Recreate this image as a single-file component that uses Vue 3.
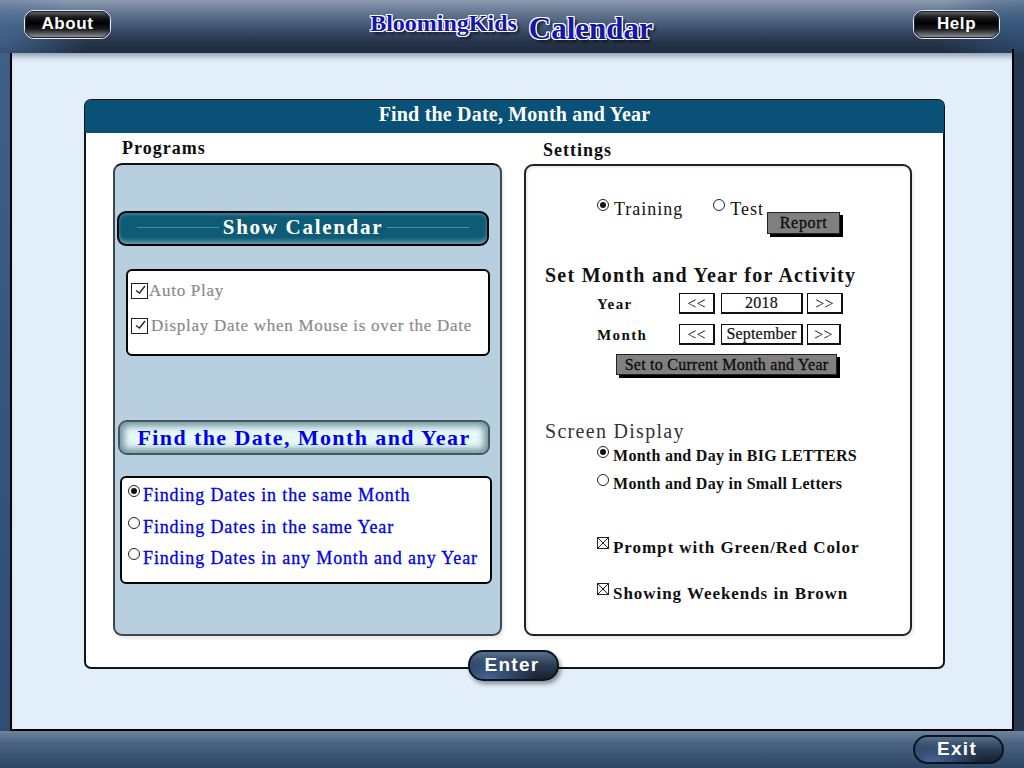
<template>
  <div class="screen">
    <header class="topbar">
      <button class="gloss">About</button>
      <div class="brand">
        <span class="brand-small">BloomingKids</span>
        <span class="brand-big">Calendar</span>
      </div>
      <button class="gloss">Help</button>
    </header>

    <main class="stage">
      <section class="card">
        <h1 class="card-title">Find the Date, Month and Year</h1>
        <div class="columns">
          <div class="col">
            <h2 class="col-title programs-title">Programs</h2>
            <div class="programs">
              <div class="show-bar">Show Calendar</div>
              <div class="box auto-box">
                <div class="auto-row" v-for="row in autoRows" :key="row.label" :class="row.cls">
                  <svg class="tick" width="18" height="16" viewBox="0 0 18 16">
                    <rect x="0.5" y="0.5" width="16" height="15" fill="#fff" stroke="#222" />
                    <path d="M5 7.5 L8.5 10 L14 3" fill="none" stroke="#222" stroke-width="1.3" />
                  </svg>
                  <span>{{ row.label }}</span>
                </div>
              </div>
              <div class="find-bar">Find the Date, Month and Year</div>
              <div class="box find-box">
                <div class="find-row" v-for="(label, i) in findRows" :key="label">
                  <span class="radio" :class="{ on: i === 0 }"></span>
                  <span>{{ label }}</span>
                </div>
              </div>
            </div>
          </div>

          <div class="col">
            <h2 class="col-title settings-title">Settings</h2>
            <div class="settings">
              <div class="mode-row">
                <span class="radio on"></span>
                <span class="mode-label training">Training</span>
                <span class="radio"></span>
                <span class="mode-label">Test</span>
                <button class="grey report">Report</button>
              </div>
              <h3 class="set-title">Set Month and Year for Activity</h3>
              <div class="pick-row">
                <span class="pick-label">Year</span>
                <button class="pick arrow">&lt;&lt;</button>
                <span class="pick value">2018</span>
                <button class="pick arrow">&gt;&gt;</button>
              </div>
              <div class="pick-row month-row">
                <span class="pick-label">Month</span>
                <button class="pick arrow">&lt;&lt;</button>
                <span class="pick value">September</span>
                <button class="pick arrow narrow">&gt;&gt;</button>
              </div>
              <button class="grey current">Set to Current Month and Year</button>
              <h3 class="display-title">Screen Display</h3>
              <div class="display-row first">
                <span class="radio on"></span>
                <span>Month and Day in BIG LETTERS</span>
              </div>
              <div class="display-row">
                <span class="radio"></span>
                <span>Month and Day in Small Letters</span>
              </div>
              <div class="option-row prompt">
                <svg class="cross" width="12" height="12" viewBox="0 0 12 12">
                  <rect x="0.5" y="0.5" width="11" height="11" fill="#fff" stroke="#222" />
                  <path d="M1 1 L11 11 M11 1 L1 11" stroke="#222" stroke-width="1" />
                </svg>
                <span>Prompt with Green/Red Color</span>
              </div>
              <div class="option-row weekends">
                <svg class="cross" width="12" height="12" viewBox="0 0 12 12">
                  <rect x="0.5" y="0.5" width="11" height="11" fill="#fff" stroke="#222" />
                  <path d="M1 1 L11 11 M11 1 L1 11" stroke="#222" stroke-width="1" />
                </svg>
                <span>Showing Weekends in Brown</span>
              </div>
            </div>
          </div>
        </div>
        <button class="pill enter">Enter</button>
      </section>
    </main>

    <footer class="bottombar">
      <button class="pill">Exit</button>
    </footer>
  </div>
</template>

<script setup>
const autoRows = [
  { label: "Auto Play", cls: "auto-first" },
  { label: "Display Date when Mouse is over the Date", cls: "auto-second" },
];

const findRows = [
  "Finding Dates in the same Month",
  "Finding Dates in the same Year",
  "Finding Dates in any Month and any Year",
];
</script>

<style>
html,
body {
  margin: 0;
  background: #24384f;
}
</style>

<style scoped>
.screen {
  width: 1024px;
  height: 768px;
  display: flex;
  flex-direction: column;
  overflow: hidden;
  font-family: "Liberation Serif", serif;
  background:
    linear-gradient(90deg, rgba(38, 56, 80, 0) 1012px, #26374f 1012px),
    linear-gradient(180deg, #3f6089 0, #2e4c72 100%);
}

button {
  font-family: inherit;
  padding: 0;
  cursor: pointer;
}

h1,
h2,
h3 {
  margin: 0;
}

/* top and bottom bars */
.topbar {
  height: 53px;
  box-sizing: border-box;
  padding: 10px 24px 0;
  display: flex;
  justify-content: space-between;
  align-items: flex-start;
  background:
    radial-gradient(ellipse 90px 60px at 0 40px, rgba(70, 110, 155, 0.75), rgba(60, 95, 135, 0) 100%),
    radial-gradient(ellipse 90px 60px at 100% 30px, rgba(50, 85, 125, 0.8), rgba(60, 95, 135, 0) 100%),
    linear-gradient(180deg, #8c9bb0 0, #667993 12px, #3d526f 28px, #26344a 42px, #1f2b3d 52px);
}

.gloss {
  width: 87px;
  height: 29px;
  box-sizing: border-box;
  padding-bottom: 2px;
  border: 1px solid #e8edf2;
  outline: 1px solid #1a2230;
  outline-offset: -2px;
  border-radius: 10px;
  color: #fff;
  font-family: "Liberation Sans", sans-serif;
  font-size: 17px;
  font-weight: bold;
  letter-spacing: 0.6px;
  background: linear-gradient(180deg, #6d6f74 0, #1c1c1e 22%, #000 45%, #1c1c1e 68%, #9a9da2 100%);
}

.brand {
  display: flex;
  align-items: flex-start;
  gap: 12px;
  margin-top: -1px;
  margin-left: -1px;
  font-weight: bold;
  color: #1616a8;
  text-shadow:
    1px 0 0 #fff, -1px 0 0 #fff, 0 1px 0 #fff, 0 -1px 0 #fff,
    1px 1px 0 #fff, -1px -1px 0 #fff, 1px -1px 0 #fff, -1px 1px 0 #fff,
    3px 3px 3px rgba(0, 0, 0, 0.7);
}

.brand-small {
  font-size: 24px;
  line-height: 28px;
}

.brand-big {
  margin-top: 2px;
  font-size: 31px;
  line-height: 36px;
}

.bottombar {
  height: 37px;
  box-sizing: border-box;
  padding: 4px 20px 0 0;
  display: flex;
  justify-content: flex-end;
  background: linear-gradient(180deg, #6f829e 0, #4b6483 12px, #2c4565 37px);
}

.pill {
  width: 91px;
  height: 29px;
  box-sizing: border-box;
  padding: 0 3px 2px 0;
  border: 2px solid #0c1420;
  border-radius: 15px;
  color: #fff;
  font-family: "Liberation Sans", sans-serif;
  font-size: 19px;
  font-weight: bold;
  letter-spacing: 1.3px;
  background:
    radial-gradient(ellipse 50px 22px at 20% 100%, #45689a, rgba(69, 104, 154, 0) 100%),
    linear-gradient(180deg, #55708f 0, #2c4058 45%, #17202e 100%);
}

/* main frame */
.stage {
  flex: 1;
  position: relative;
  box-sizing: border-box;
  margin: 0 10px;
  border-left: 2px solid #000;
  border-right: 2px solid #000;
  border-bottom: 2px solid #000;
  padding: 46px 0 0 72px;
  background: #e2effa;
  box-shadow: inset 0 7px 6px -4px #8797a6;
}

.stage::after {
  content: "";
  position: absolute;
  right: -2px;
  top: -4px;
  width: 2px;
  height: 4px;
  background: #000;
}

.card {
  position: relative;
  width: 861px;
  height: 570px;
  box-sizing: border-box;
  border: 2px solid #141414;
  border-radius: 7px;
  background: #fff;
}

.card-title {
  margin: -1px -1px 0;
  height: 33px;
  border-radius: 5px 5px 0 0;
  background: #0a5178;
  color: #fff;
  font-size: 20px;
  line-height: 29px;
  font-weight: bold;
  letter-spacing: 0.2px;
  text-align: center;
}

.enter {
  position: absolute;
  left: 382px;
  top: 549px;
  height: 31px;
  box-shadow: 2px 3px 4px rgba(0, 0, 0, 0.4);
}

.columns {
  display: grid;
  grid-template-columns: 389px 388px;
  gap: 22px;
  padding-left: 27px;
}

.col-title {
  font-size: 18px;
  font-weight: bold;
  color: #0d0d0d;
  letter-spacing: 1px;
}

.programs-title {
  height: 30px;
  line-height: 31px;
  padding-left: 9px;
}

.settings-title {
  height: 31px;
  line-height: 35px;
  padding-left: 19px;
}

/* left panel */
.programs {
  height: 473px;
  box-sizing: border-box;
  border: 2px solid #3c4750;
  border-top-color: #111;
  border-radius: 9px;
  padding: 46px 0 0;
  background: #b8cfdf;
  box-shadow: 2px 3px 3px #ececec;
}

.show-bar {
  margin-left: 2px;
  width: 372px;
  height: 35px;
  box-sizing: border-box;
  padding: 0 18px 2px;
  display: flex;
  align-items: center;
  gap: 4px;
  border: 2px solid #050505;
  border-radius: 9px;
  background: #0e5b76;
  box-shadow: inset 0 -4px 4px -1px #6c9aac, inset 0 3px 3px -1px #3a7c94;
  color: #fff;
  font-size: 21px;
  font-weight: bold;
  letter-spacing: 1.7px;
}

.show-bar::before,
.show-bar::after {
  content: "";
  flex: 1;
  height: 1px;
  background: #3f8fa8;
}

.box {
  box-sizing: border-box;
  border: 2px solid #050505;
  border-radius: 6px;
  background: #fff;
}

.auto-box {
  margin: 23px 0 0 11px;
  width: 364px;
  height: 87px;
  padding: 11px 0 0 3px;
  color: #8a8a8a;
  font-size: 17px;
  letter-spacing: 0.72px;
  -webkit-text-stroke: 0.2px #8a8a8a;
}

.auto-row {
  display: flex;
  align-items: center;
  height: 18px;
}

.auto-second {
  margin-top: 17px;
}

.auto-second .tick {
  margin-right: 2px;
}

.find-bar {
  margin: 64px 0 0 3px;
  width: 372px;
  height: 35px;
  box-sizing: border-box;
  border: 2px solid #46555f;
  border-radius: 9px;
  background: #e6f9f8;
  box-shadow: inset 0 0 7px 4px #6d929c;
  color: #0000ee;
  font-size: 22px;
  font-weight: bold;
  line-height: 31px;
  letter-spacing: 1.4px;
  text-align: center;
}

.find-box {
  margin: 21px 0 0 5px;
  width: 372px;
  height: 108px;
  padding: 6px 0 0 6px;
  color: #0000e6;
  font-size: 18px;
  letter-spacing: 0.87px;
  -webkit-text-stroke: 0.3px #0000e6;
}

.find-row {
  display: flex;
  align-items: flex-start;
  height: 31.5px;
  line-height: 22px;
}

.find-row .radio {
  margin: 1px 3px 0 0;
}

.radio {
  position: relative;
  flex: none;
  width: 12px;
  height: 12px;
  box-sizing: border-box;
  border: 1px solid #222;
  border-radius: 50%;
  background: #fff;
  -webkit-text-stroke: 0;
}

.radio.on::after {
  content: "";
  position: absolute;
  inset: 2px;
  border-radius: 50%;
  background: #111;
}

/* right panel */
.settings {
  height: 472px;
  box-sizing: border-box;
  border: 2px solid #222;
  border-radius: 9px;
  padding: 33px 0 0 19px;
  background: #fff;
  box-shadow: 2px 3px 3px #ececec, inset 2px 2px 2px #eeeeee;
  color: #111;
}

.mode-row {
  display: flex;
  align-items: flex-start;
  height: 64px;
  padding-left: 52px;
  font-size: 18px;
  letter-spacing: 1px;
  line-height: 20px;
}

.mode-label {
  margin-left: 5px;
}

.training {
  margin-right: 30px;
}

.grey {
  box-sizing: border-box;
  border: 1px solid #222;
  background: #808080;
  box-shadow: 3px 3px 0 #000;
  color: #0c0c0c;
  font-family: "Liberation Serif", serif;
  font-weight: normal;
  -webkit-text-stroke: 0.3px #0c0c0c;
}

.report {
  width: 73px;
  height: 22px;
  margin: 13px 0 0 3px;
  font-size: 16px;
  letter-spacing: 0.7px;
}

.set-title {
  margin-top: 0;
  height: 24px;
  line-height: 24px;
  font-size: 20px;
  font-weight: bold;
  letter-spacing: 1.25px;
}

.pick-row {
  display: flex;
  align-items: center;
  margin: 6px 0 0 52px;
  height: 21px;
}

.month-row {
  margin-top: 10px;
}

.pick-label {
  width: 82px;
  padding-top: 2px;
  font-size: 15px;
  font-weight: bold;
  letter-spacing: 1.4px;
}

.pick {
  height: 21px;
  box-sizing: border-box;
  border: 1px solid #111;
  border-right-width: 2px;
  border-bottom-width: 2px;
  background: #fff;
  color: #111;
  font-family: "Liberation Serif", serif;
  font-size: 16px;
  line-height: 17px;
  letter-spacing: 0.2px;
  text-align: center;
}

.arrow {
  width: 36px;
}

.narrow {
  width: 34px;
}

.value {
  width: 82px;
  margin: 0 4px 0 6px;
  -webkit-text-stroke: 0.2px #111;
}

.current {
  display: block;
  width: 221px;
  height: 21px;
  margin: 9px 0 0 71px;
  font-size: 16px;
  letter-spacing: 0.25px;
  white-space: nowrap;
}

.display-title {
  margin-top: 44px;
  height: 24px;
  line-height: 24px;
  font-size: 20px;
  font-weight: normal;
  color: #333;
  letter-spacing: 1.3px;
}

.display-row {
  display: flex;
  align-items: flex-start;
  gap: 4px;
  margin-left: 52px;
  height: 28px;
  line-height: 19px;
  font-size: 16px;
  font-weight: bold;
  letter-spacing: 0.28px;
}

.display-row.first {
  margin-top: 3px;
}

.option-row {
  display: flex;
  align-items: flex-start;
  gap: 4px;
  margin-left: 52px;
  height: 22px;
  line-height: 22px;
  font-size: 17px;
  font-weight: bold;
  letter-spacing: 0.95px;
}

.prompt {
  margin-top: 35px;
}

.weekends {
  margin-top: 24px;
}

.cross {
  margin-top: 0;
  flex: none;
}
</style>
